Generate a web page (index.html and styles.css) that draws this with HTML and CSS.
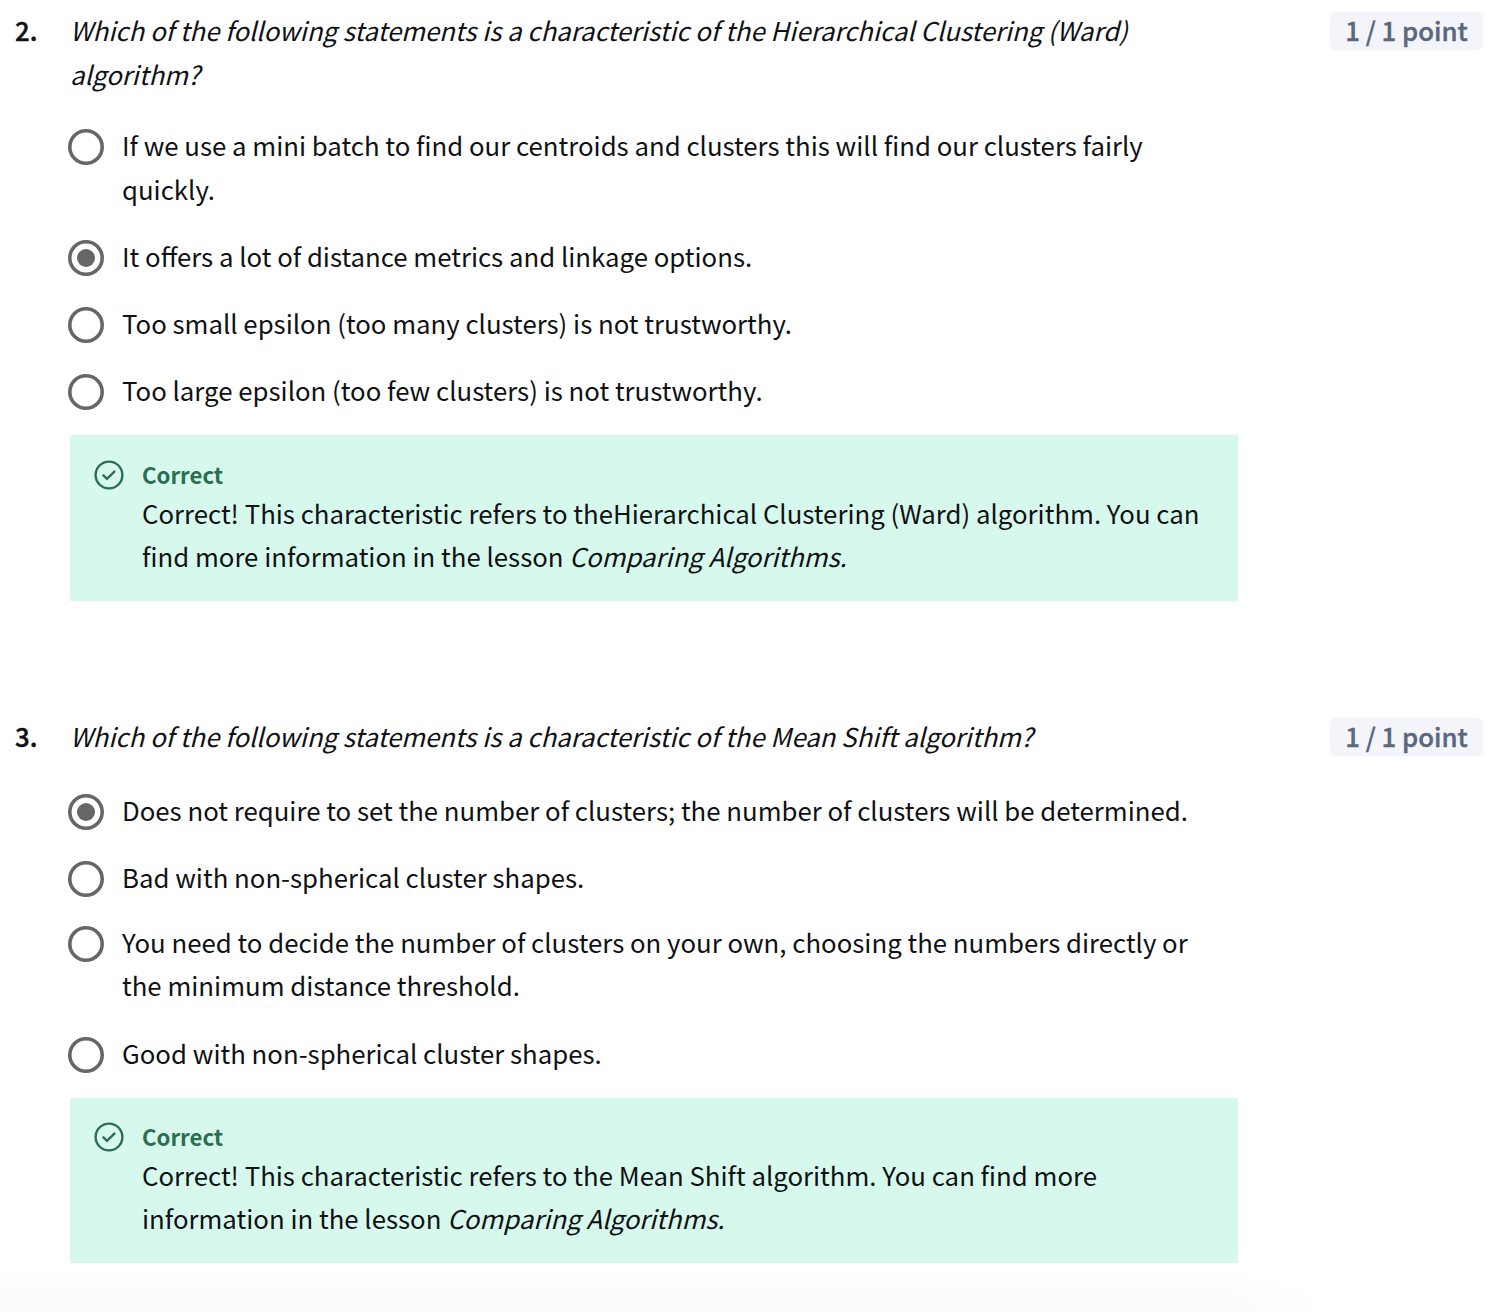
FILE: index.html
```html
<!DOCTYPE html>
<html lang="en">
<head>
<meta charset="utf-8">
<title>Quiz</title>
<link rel="stylesheet" href="styles.css">
</head>
<body>
<main class="quiz">
  <section class="question">
    <div class="number">2.</div>
    <div class="body">
      <p class="prompt">Which of the following statements is a characteristic of the Hierarchical Clustering (Ward)<br>algorithm?</p>
      <ul class="options">
        <li class="option two-line"><span class="radio"></span><span class="label">If we use a mini batch to find our centroids and clusters this will find our clusters fairly<br>quickly.</span></li>
        <li class="option"><span class="radio checked"></span><span class="label">It offers a lot of distance metrics and linkage options.</span></li>
        <li class="option"><span class="radio"></span><span class="label">Too small epsilon (too many clusters) is not trustworthy.</span></li>
        <li class="option"><span class="radio"></span><span class="label">Too large epsilon (too few clusters) is not trustworthy.</span></li>
      </ul>
      <div class="feedback">
        <svg class="check" viewBox="0 0 30 30"><circle cx="15" cy="15" r="13.4"/><path d="M9.4 15.3l3.6 3.6 7.4-7.3"/></svg>
        <div class="feedback-text">
          <h3 class="verdict">Correct</h3>
          <p class="detail">Correct! This characteristic refers to theHierarchical Clustering (Ward) algorithm. You can<br>find more information in the lesson <em class="lesson">Comparing Algorithms.</em></p>
        </div>
      </div>
    </div>
    <div class="points">1 / 1 point</div>
  </section>
  <section class="question last">
    <div class="number">3.</div>
    <div class="body">
      <p class="prompt">Which of the following statements is a characteristic of the Mean Shift algorithm?</p>
      <ul class="options">
        <li class="option"><span class="radio checked"></span><span class="label">Does not require to set the number of clusters; the number of clusters will be determined.</span></li>
        <li class="option"><span class="radio"></span><span class="label">Bad with non-spherical cluster shapes.</span></li>
        <li class="option two-line tight"><span class="radio"></span><span class="label">You need to decide the number of clusters on your own, choosing the numbers directly or<br>the minimum distance threshold.</span></li>
        <li class="option"><span class="radio"></span><span class="label">Good with non-spherical cluster shapes.</span></li>
      </ul>
      <div class="feedback">
        <svg class="check" viewBox="0 0 30 30"><circle cx="15" cy="15" r="13.4"/><path d="M9.4 15.3l3.6 3.6 7.4-7.3"/></svg>
        <div class="feedback-text">
          <h3 class="verdict">Correct</h3>
          <p class="detail">Correct! This characteristic refers to the Mean Shift algorithm. You can find more<br>information in the lesson <em class="lesson">Comparing Algorithms.</em></p>
        </div>
      </div>
    </div>
    <div class="points">1 / 1 point</div>
  </section>
</main>
</body>
</html>
```
FILE: styles.css
```css
* { box-sizing: border-box; margin: 0; padding: 0; }
body {
  width: 1512px; height: 1312px; color: #0f1114;
  background:
    linear-gradient(to top, #fafafa, #fff) left bottom / 1180px 46px no-repeat,
    radial-gradient(ellipse 150px 46px at 0 100%, #fafafa, #fff) 1180px 100% / 160px 46px no-repeat,
    #fff;
  font-family: "Noto Sans CJK SC", sans-serif; font-size: 25.78px; line-height: 43px;
  white-space: nowrap;
}
.quiz { padding: 8px 29px 0 14px; display: flex; flex-direction: column; }
.question { display: grid; grid-template-columns: 56px 1168px 1fr; height: 706px; align-items: start; }
.question.last { height: 560px; }
.number { font-weight: 500; -webkit-text-stroke: 0.4px currentColor; line-height: 44px; padding-left: 1px; }
.prompt { font-style: italic; line-height: 44px; }
.points {
  justify-self: end; width: 153px; height: 38px; margin-top: 4px; border-radius: 6px;
  background: #f3f5fa; color: #5b6780; font-weight: 500; -webkit-text-stroke: 0.4px currentColor;
  line-height: 36px; text-align: center;
}
.options { list-style: none; padding-top: 15px; }
.last .options { padding-top: 18px; }
.option { display: flex; gap: 18px; padding: 12px 0; margin-left: -2px; }
.option.two-line { line-height: 44px; padding-bottom: 11px; }
.option.tight { line-height: 43px; padding-top: 10px; padding-bottom: 13px; }
.radio { width: 36px; height: 36px; margin-top: 6px; box-shadow: inset 0 0 0 3.6px #666; border-radius: 50%; display: grid; place-items: center; flex: none; }
.radio.checked::after { content: ""; width: 18px; height: 18px; border-radius: 50%; background: #666; }
.feedback { display: flex; background: #d7f8ec; height: 166px; margin-top: 12px; padding: 25px 24px 0; gap: 18px; }
.last .feedback { height: 165px; padding-top: 24px; }
.check { width: 30px; height: 30px; flex: none; fill: none; stroke: #2c6e52; stroke-width: 2.4; stroke-linecap: round; }
.feedback-text { margin-top: -2px; }
.verdict { font-size: 22.2px; line-height: 33px; color: #2c6e52; font-weight: 700; }
```
